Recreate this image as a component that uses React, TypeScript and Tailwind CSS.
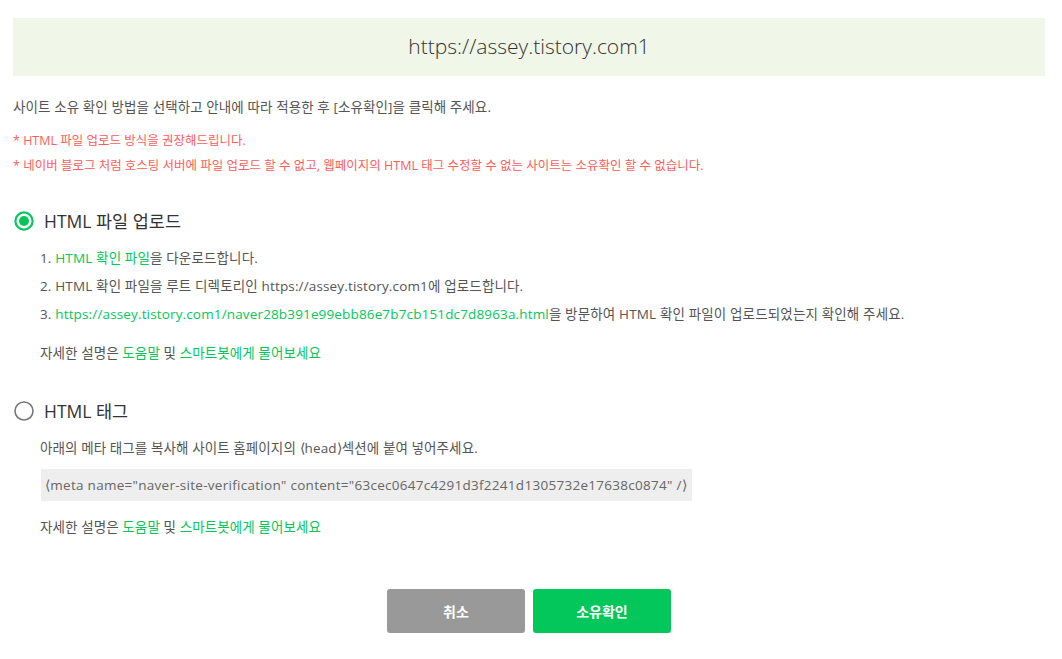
import type { ReactNode } from "react";

const font = { fontFamily: '"Open Sans", "Noto Sans CJK KR", sans-serif' };

function Radio({ checked }: { checked: boolean }) {
  return (
    <svg width="22" height="22" viewBox="0 0 22 22" className="shrink-0">
      {checked ? (
        <>
          <circle cx="11" cy="11" r="8.6" fill="none" stroke="#03c75a" strokeWidth="2.2" />
          <circle cx="11" cy="11" r="5" fill="#03c75a" />
        </>
      ) : (
        <circle cx="11" cy="11" r="9" fill="none" stroke="#767676" strokeWidth="1.6" />
      )}
    </svg>
  );
}

function Green({ children }: { children: ReactNode }) {
  return <span className="text-[#03c75a]">{children}</span>;
}

function HelpLine({ className }: { className: string }) {
  return (
    <p className={`pl-[27px] text-[13.5px] leading-[20px] tracking-[0.1px] text-[#555] ${className}`}>
      자세한 설명은 <Green>도움말</Green> 및 <Green>스마트봇에게 물어보세요</Green>
    </p>
  );
}

export default function App() {
  const site = "https://assey.tistory.com1";

  return (
    <div className="h-[659px] w-full bg-white pl-[13px] pt-[18px]" style={font}>
      <div className="w-[1032px]">
        <div className="flex h-[58px] items-center justify-center bg-[#f0f6e8] text-[21px] font-light text-[#333]">
          {site}
        </div>

        <p className="mt-[21px] text-[13.5px] leading-[20px] tracking-[0.1px] text-[#555]">
          사이트 소유 확인 방법을 선택하고 안내에 따라 적용한 후 [소유확인]을 클릭해 주세요.
        </p>
        <div className="mt-[11px] text-[12.5px] leading-[25px] text-[#ff5c5c]">
          <p>* HTML 파일 업로드 방식을 권장해드립니다.</p>
          <p>
            * 네이버 블로그 처럼 호스팅 서버에 파일 업로드 할 수 없고, 웹페이지의 HTML 태그 수정할 수 없는
            사이트는 소유확인 할 수 없습니다.
          </p>
        </div>

        <label className="mt-[31px] flex h-[24px] items-center gap-[9px]">
          <Radio checked />
          <span className="text-[17.5px] text-[#333]">HTML 파일 업로드</span>
        </label>
        <ol className="mt-[11px] pl-[27px] text-[13.5px] leading-[28px] tracking-[0.15px] text-[#555]">
          <li>
            1. <Green>HTML 확인 파일</Green>을 다운로드합니다.
          </li>
          <li>2. HTML 확인 파일을 루트 디렉토리인 {site}에 업로드합니다.</li>
          <li>
            3. <Green>{site}/naver28b391e99ebb86e7b7cb151dc7d8963a.html</Green>을 방문하여 HTML 확인 파일이
            업로드되었는지 확인해 주세요.
          </li>
        </ol>
        <HelpLine className="mt-[15px]" />

        <label className="mt-[36px] flex h-[24px] items-center gap-[9px]">
          <Radio checked={false} />
          <span className="text-[17.5px] text-[#333]">HTML 태그</span>
        </label>
        <p className="mt-[15px] pl-[27px] text-[13.5px] leading-[20px] tracking-[0.1px] text-[#555]">
          아래의 메타 태그를 복사해 사이트 홈페이지의 ⟨head⟩섹션에 붙여 넣어주세요.
        </p>
        <div className="ml-[28px] mt-[11px] flex h-[32px] w-[651px] items-center whitespace-nowrap bg-[#eeeeee] px-[4px] text-[13.5px] tracking-[0.28px] text-[#666]">
          ⟨meta name="naver-site-verification" content="63cec0647c4291d3f2241d1305732e17638c0874" /⟩
        </div>
        <HelpLine className="mt-[16px]" />

        <div className="mt-[52px] flex justify-center gap-[8px]">
          <button className="h-[44px] w-[138px] rounded-[3px] bg-[#999999] text-[14px] font-bold text-white">
            취소
          </button>
          <button className="h-[44px] w-[138px] rounded-[3px] bg-[#03c75a] text-[14px] font-bold text-white">
            소유확인
          </button>
        </div>
      </div>
    </div>
  );
}
